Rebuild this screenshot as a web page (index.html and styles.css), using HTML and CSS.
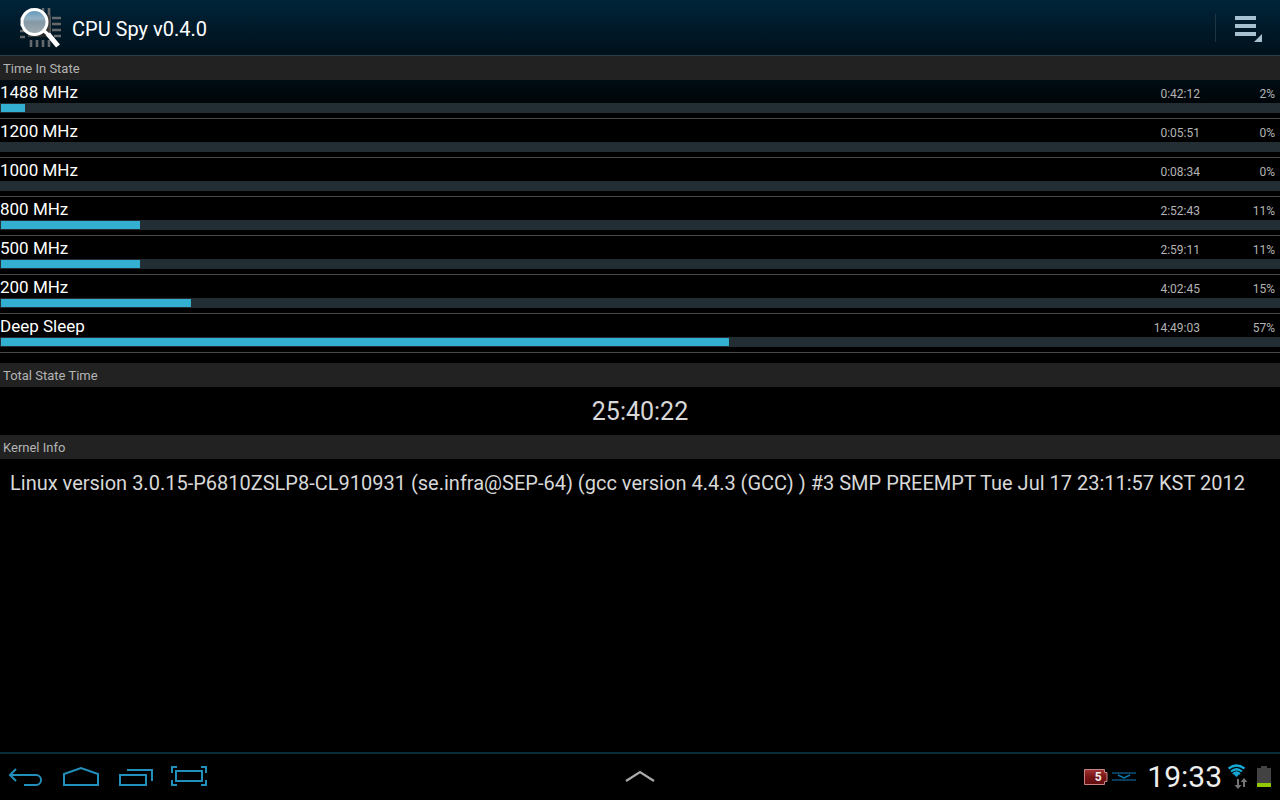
FILE: index.html
```
<!DOCTYPE html>
<html lang="en">
<head>
    <meta charset="UTF-8">
    <meta name="viewport" content="width=device-width, initial-scale=1.0">
    <title>CPU Spy</title>
    <link rel="stylesheet" href="styles.css">
</head>
<body>
    <header class="action-bar">
        <svg class="app-icon" width="48" height="48" viewBox="0 0 48 48" aria-hidden="true">
            <defs>
                <linearGradient id="lens" x1="0" y1="0" x2="0" y2="1">
                    <stop offset="0" stop-color="#5a94b8"/>
                    <stop offset="0.35" stop-color="#93b1c4"/>
                    <stop offset="0.5" stop-color="#8499a6"/>
                    <stop offset="1" stop-color="#a3abb0"/>
                </linearGradient>
                <linearGradient id="chip" x1="0" y1="0" x2="1" y2="0">
                    <stop offset="0" stop-color="#444"/>
                    <stop offset="0.75" stop-color="#222"/>
                    <stop offset="1" stop-color="#555"/>
                </linearGradient>
            </defs>
            <g stroke="#65696c" stroke-width="2.6">
                <path d="M15 4v6M21 4v6M27 4v8M33 4v8M15 36v7M21 36v7M27 36v7M33 36v7"/>
                <path d="M4 15h8M4 21h8M4 27h5M4 33h5M36 14h9M36 20h9M36 26h9M38 32h7"/>
            </g>
            <path fill="url(#chip)" d="M12 11h23v22H12z"/>
            <path stroke="#fff" stroke-width="3.5" d="M27 26l8 7"/>
            <path stroke="#fff" stroke-width="5" d="M32 30l10 12"/>
            <circle cx="18.5" cy="18" r="12.5" fill="url(#lens)" stroke="#fff" stroke-width="3"/>
        </svg>
        <h1>CPU Spy v0.4.0</h1>
        <button class="menu-button" type="button" aria-label="Menu">
            <svg width="28" height="28" viewBox="0 0 28 28" fill="#a8c1d0" aria-hidden="true">
                <path d="M0 2h21v4H0zM0 10h21v4H0zM0 18h21v4H0zM27 20v8h-8z"/>
            </svg>
        </button>
    </header>

    <main>
        <h2>Time In State</h2>
        <table class="states">
            <tbody>
                <tr><th scope="row">1488 MHz</th><td class="time">0:42:12</td><td class="percent">2%</td></tr>
                <tr class="bar-row"><td colspan="3"><div class="bar"><div class="fill" style="width: 1.9%"></div></div></td></tr>
            </tbody>
            <tbody>
                <tr><th scope="row">1200 MHz</th><td class="time">0:05:51</td><td class="percent">0%</td></tr>
                <tr class="bar-row"><td colspan="3"><div class="bar"><div class="fill" style="width: 0%"></div></div></td></tr>
            </tbody>
            <tbody>
                <tr><th scope="row">1000 MHz</th><td class="time">0:08:34</td><td class="percent">0%</td></tr>
                <tr class="bar-row"><td colspan="3"><div class="bar"><div class="fill" style="width: 0%"></div></div></td></tr>
            </tbody>
            <tbody>
                <tr><th scope="row">800 MHz</th><td class="time">2:52:43</td><td class="percent">11%</td></tr>
                <tr class="bar-row"><td colspan="3"><div class="bar"><div class="fill" style="width: 10.9%"></div></div></td></tr>
            </tbody>
            <tbody>
                <tr><th scope="row">500 MHz</th><td class="time">2:59:11</td><td class="percent">11%</td></tr>
                <tr class="bar-row"><td colspan="3"><div class="bar"><div class="fill" style="width: 10.9%"></div></div></td></tr>
            </tbody>
            <tbody>
                <tr><th scope="row">200 MHz</th><td class="time">4:02:45</td><td class="percent">15%</td></tr>
                <tr class="bar-row"><td colspan="3"><div class="bar"><div class="fill" style="width: 14.9%"></div></div></td></tr>
            </tbody>
            <tbody>
                <tr><th scope="row">Deep Sleep</th><td class="time">14:49:03</td><td class="percent">57%</td></tr>
                <tr class="bar-row"><td colspan="3"><div class="bar"><div class="fill" style="width: 57%"></div></div></td></tr>
            </tbody>
        </table>

        <h2>Total State Time</h2>
        <p class="total">25:40:22</p>

        <h2>Kernel Info</h2>
        <p class="kernel">Linux version 3.0.15-P6810ZSLP8-CL910931 (se.infra@SEP-64) (gcc version 4.4.3 (GCC) ) #3 SMP PREEMPT Tue Jul 17 23:11:57 KST 2012</p>
    </main>

    <footer class="system-bar">
        <nav class="nav-keys">
            <button type="button" aria-label="Back">
                <svg width="38" height="24" viewBox="0 0 38 24" aria-hidden="true">
                    <path d="M8 4l-6 6 6 6M2 10h26a4.500 4.500 0 0 1 0 10H16"/>
                </svg>
            </button>
            <button type="button" aria-label="Home">
                <svg width="38" height="24" viewBox="0 0 38 24" aria-hidden="true">
                    <path d="M2 20V9l17-6 17 6v11z"/>
                </svg>
            </button>
            <button type="button" aria-label="Recent apps">
                <svg width="38" height="24" viewBox="0 0 38 24" aria-hidden="true">
                    <path d="M4 10h26v10H4zM11 5h25v11"/>
                </svg>
            </button>
            <button type="button" aria-label="Screenshot">
                <svg width="38" height="24" viewBox="0 0 38 24" aria-hidden="true">
                    <path d="M6 6h26v10H6zM2 8V2h5M31 2h5v6M2 15v5h5M36 15v5h-5"/>
                </svg>
            </button>
        </nav>
        <button class="tray-button" type="button" aria-label="Open tray">
            <svg width="32" height="14" viewBox="0 0 32 14" aria-hidden="true">
                <path fill="none" stroke="#a9a9a9" stroke-width="2.3" d="M2 11l14-9 14 9"/>
            </svg>
        </button>
        <div class="status">
            <div class="charge">
                <svg width="24" height="16" viewBox="0 0 24 16" aria-hidden="true">
                    <defs>
                        <linearGradient id="red" x1="0" y1="0" x2="0" y2="1">
                            <stop offset="0" stop-color="#a03535"/>
                            <stop offset="0.5" stop-color="#791414"/>
                            <stop offset="1" stop-color="#621010"/>
                        </linearGradient>
                    </defs>
                    <path fill="url(#red)" stroke="#c98282" d="M.5.5h20v3h2.500v9h-2.500v3H.5z"/>
                </svg>
                <span>5</span>
            </div>
            <svg width="24" height="10" viewBox="0 0 24 10" fill="none" aria-hidden="true">
                <path stroke="#0a3d5b" stroke-width="2" d="M0 1h24M0 8h24"/>
                <path stroke="#087aac" stroke-width="1.500" d="M6 3l6 3 6-3"/>
            </svg>
            <time>19:33</time>
            <svg width="20" height="26" viewBox="0 0 20 26" fill="none" aria-hidden="true">
                <g stroke="#13a9d8" stroke-width="2.2">
                    <path d="M.5 4.500q8-6 16 0M3 7.500q5.500-4.500 11 0M5 10q3.500-3 7 0"/>
                    <path fill="#13a9d8" stroke="none" d="M6 10.500q2.500-2 5 0l-2.500 2.500z"/>
                </g>
                <path fill="#747474" d="M9 15h2v6h2.500L10 25 6.500 21H9zM15 23h2v-5h2.500L16 14l-3.500 4H15z"/>
            </svg>
            <svg class="battery" width="14" height="22" viewBox="0 0 14 22" aria-hidden="true">
                <path fill="#424242" d="M0 2h4V0h6v2h4v15H0z"/>
                <path fill="#92c800" d="M0 17h14v4H0z"/>
            </svg>
        </div>
    </footer>
</body>
</html>
```
FILE: styles.css
```
* {
    box-sizing: border-box;
}
body {
    background: #000 linear-gradient(#00243a, #001827 32px, #00121a 56px, #000b12 84px, #000 120px) no-repeat;
    color: #fff;
    display: flex;
    flex-direction: column;
    font-family: Roboto, sans-serif;
    margin: 0;
    min-height: 100vh;
}
h1, h2, p {
    font-weight: 400;
    margin: 0;
}
button {
    background: none;
    border: none;
    cursor: pointer;
    display: flex;
    padding: 0;
}
svg {
    display: block;
    flex: none;
}

.action-bar {
    align-items: center;
    border-bottom: 1px solid #2a3e48;
    display: flex;
    height: 56px;
    padding: 0 17px 0 16px;
}
.action-bar h1 {
    flex: 1;
    font-size: 20px;
    line-height: 24px;
    padding: 2px 8px 0;
}
.menu-button {
    border-left: 1px solid #1f3541;
    padding-left: 19px;
}

main {
    flex: 1;
}
h2 {
    background-color: #222;
    color: #b4b4b4;
    font-size: 13px;
    height: 24px;
    line-height: 24px;
    padding: 1px 3px 0;
}

.states {
    border-collapse: collapse;
    margin-bottom: 10px;
    width: 100%;
}
.states tbody {
    border-bottom: 1px solid #484848;
}
.states th, .states td {
    height: 23px;
    line-height: 22px;
    padding: 1px 0 0;
}
.states th {
    font-size: 17px;
    font-weight: 400;
    text-align: left;
}
.states .time, .states .percent {
    color: #b4b4b4;
    font-size: 12px;
    line-height: 18px;
    padding-top: 5px;
    text-align: right;
}
.states .percent {
    padding-right: 5px;
    width: 80px;
}
.states .bar-row td {
    height: 15px;
    padding: 0 0 5px;
}
.bar {
    background-color: #222e33;
    height: 10px;
    padding: 1px;
}
.fill {
    background-color: #33b0d1;
    height: 8px;
}

.total {
    color: #d8d8d8;
    font-size: 25px;
    height: 48px;
    line-height: 48px;
    padding-top: 1px;
    text-align: center;
}
.kernel {
    color: #d8d8d8;
    font-size: 20px;
    line-height: 28px;
    padding: 10px;
}

.system-bar {
    align-items: center;
    background-color: #000;
    border-top: 2px solid #0a2d3b;
    display: grid;
    grid-template-columns: 1fr auto 1fr;
    height: 48px;
    padding: 0 9px 0 8px;
}
.nav-keys {
    display: flex;
    gap: 16px;
}
.nav-keys svg {
    fill: none;
    stroke: #2390bb;
    stroke-width: 2;
}
.status {
    align-items: center;
    display: flex;
    justify-content: flex-end;
}
.charge {
    display: grid;
    margin-right: 4px;
}
.charge svg, .charge span {
    grid-area: 1 / 1;
}
.charge span {
    color: #eee;
    font-size: 12px;
    font-weight: 700;
    line-height: 16px;
    padding-left: 4px;
    text-align: center;
}
.status time {
    color: #eee;
    font-size: 30px;
    line-height: 36px;
    margin: 0 6px 0 11px;
}
.battery {
    margin-left: 9px;
}
```
